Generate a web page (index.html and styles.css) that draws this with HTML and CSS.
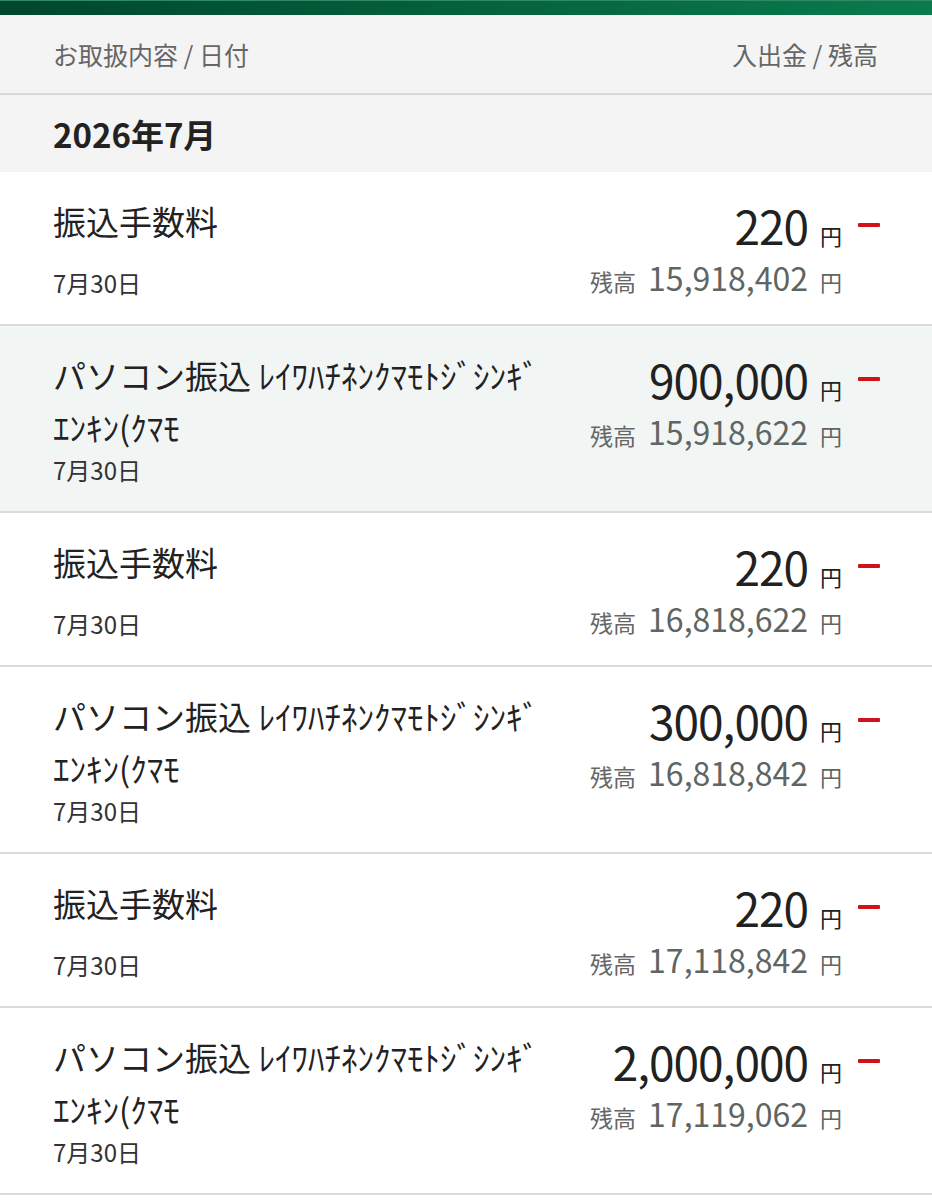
FILE: index.html
```html
<!DOCTYPE html>
<html lang="ja">
<head>
  <meta charset="UTF-8" />
  <meta name="viewport" content="width=device-width, initial-scale=1.0"/>
  <title>入出金明細</title>
  <link rel="stylesheet" href="styles.css">
</head>
<body>
  <div class="topbar"></div>

  <div class="list-head">
    <span>お取扱内容 / 日付</span>
    <span>入出金 / 残高</span>
  </div>

  <div class="month">2026年7月</div>

  <ul class="txn-list">
    <li class="txn">
      <div class="txn-info">
        <p class="txn-title">振込手数料</p>
        <p class="txn-date">7月30日</p>
      </div>
      <div class="txn-amount">
        <div class="amount-line"><span class="amount">220</span><span class="yen">円</span><span class="minus"></span></div>
        <div class="balance-line"><span class="label">残高</span><span class="balance">15,918,402</span><span class="yen">円</span></div>
      </div>
    </li>

    <li class="txn selected">
      <div class="txn-info">
        <p class="txn-title">パソコン振込 ﾚｲﾜﾊﾁﾈﾝｸﾏﾓﾄｼﾞｼﾝｷﾞｴﾝｷﾝ(ｸﾏﾓ</p>
        <p class="txn-date">7月30日</p>
      </div>
      <div class="txn-amount">
        <div class="amount-line"><span class="amount">900,000</span><span class="yen">円</span><span class="minus"></span></div>
        <div class="balance-line"><span class="label">残高</span><span class="balance">15,918,622</span><span class="yen">円</span></div>
      </div>
    </li>

    <li class="txn">
      <div class="txn-info">
        <p class="txn-title">振込手数料</p>
        <p class="txn-date">7月30日</p>
      </div>
      <div class="txn-amount">
        <div class="amount-line"><span class="amount">220</span><span class="yen">円</span><span class="minus"></span></div>
        <div class="balance-line"><span class="label">残高</span><span class="balance">16,818,622</span><span class="yen">円</span></div>
      </div>
    </li>

    <li class="txn">
      <div class="txn-info">
        <p class="txn-title">パソコン振込 ﾚｲﾜﾊﾁﾈﾝｸﾏﾓﾄｼﾞｼﾝｷﾞｴﾝｷﾝ(ｸﾏﾓ</p>
        <p class="txn-date">7月30日</p>
      </div>
      <div class="txn-amount">
        <div class="amount-line"><span class="amount">300,000</span><span class="yen">円</span><span class="minus"></span></div>
        <div class="balance-line"><span class="label">残高</span><span class="balance">16,818,842</span><span class="yen">円</span></div>
      </div>
    </li>

    <li class="txn">
      <div class="txn-info">
        <p class="txn-title">振込手数料</p>
        <p class="txn-date">7月30日</p>
      </div>
      <div class="txn-amount">
        <div class="amount-line"><span class="amount">220</span><span class="yen">円</span><span class="minus"></span></div>
        <div class="balance-line"><span class="label">残高</span><span class="balance">17,118,842</span><span class="yen">円</span></div>
      </div>
    </li>

    <li class="txn">
      <div class="txn-info">
        <p class="txn-title">パソコン振込 ﾚｲﾜﾊﾁﾈﾝｸﾏﾓﾄｼﾞｼﾝｷﾞｴﾝｷﾝ(ｸﾏﾓ</p>
        <p class="txn-date">7月30日</p>
      </div>
      <div class="txn-amount">
        <div class="amount-line"><span class="amount">2,000,000</span><span class="yen">円</span><span class="minus"></span></div>
        <div class="balance-line"><span class="label">残高</span><span class="balance">17,119,062</span><span class="yen">円</span></div>
      </div>
    </li>
  </ul>
</body>
</html>
```

FILE: styles.css
```css
body {
  margin: 0;
  background: #ffffff;
  color: #222222;
  font-family: "Noto Sans CJK JP", "Noto Sans", sans-serif;
}

.topbar {
  height: 15px;
  background: linear-gradient(to right, #00472c, #0a7b4d);
  border-top: 1px solid #2f8a66;
  box-sizing: border-box;
}

.list-head {
  display: flex;
  justify-content: space-between;
  align-items: center;
  height: 78px;
  padding: 0 54px 0 53px;
  background: #f4f4f4;
  border-bottom: 2px solid #d9d9d9;
  font-size: 25px;
  color: #666666;
}

.month {
  display: flex;
  align-items: center;
  height: 77px;
  padding-left: 53px;
  background: #f4f4f4;
  font-size: 33px;
  font-weight: 700;
  color: #222222;
}

.txn-list {
  list-style: none;
  margin: 0;
  padding: 0;
}

.txn {
  display: flex;
  justify-content: space-between;
  padding: 23px 52px 24px 53px;
  border-bottom: 2px solid #dadada;
}

.txn.selected {
  background: #f1f6f5;
}

.txn-info {
  width: 495px;
  display: flex;
  flex-direction: column;
  justify-content: space-between;
}

.txn-title {
  margin: 0;
  font-size: 33px;
  line-height: 52px;
  color: #222222;
}

.txn-date {
  margin: 0;
  font-size: 24px;
  line-height: 34px;
  color: #333333;
}

.txn-amount {
  display: flex;
  flex-direction: column;
  align-items: flex-end;
}

.amount-line {
  display: flex;
  align-items: baseline;
  height: 60px;
}

.amount {
  font-size: 46px;
  line-height: 60px;
  letter-spacing: -1px;
  color: #1f2221;
}

.yen {
  margin-left: 12px;
  font-size: 22px;
}

.minus {
  align-self: center;
  width: 22px;
  height: 4px;
  margin-left: 16px;
  background: #d2121b;
  border-radius: 1px;
}

.balance-line {
  display: flex;
  align-items: baseline;
  height: 45px;
  margin-right: 38px;
  line-height: 45px;
  color: #5e6562;
}

.balance-line .label {
  font-size: 23px;
  color: #666666;
}

.balance {
  margin-left: 12px;
  font-size: 32px;
}
```
